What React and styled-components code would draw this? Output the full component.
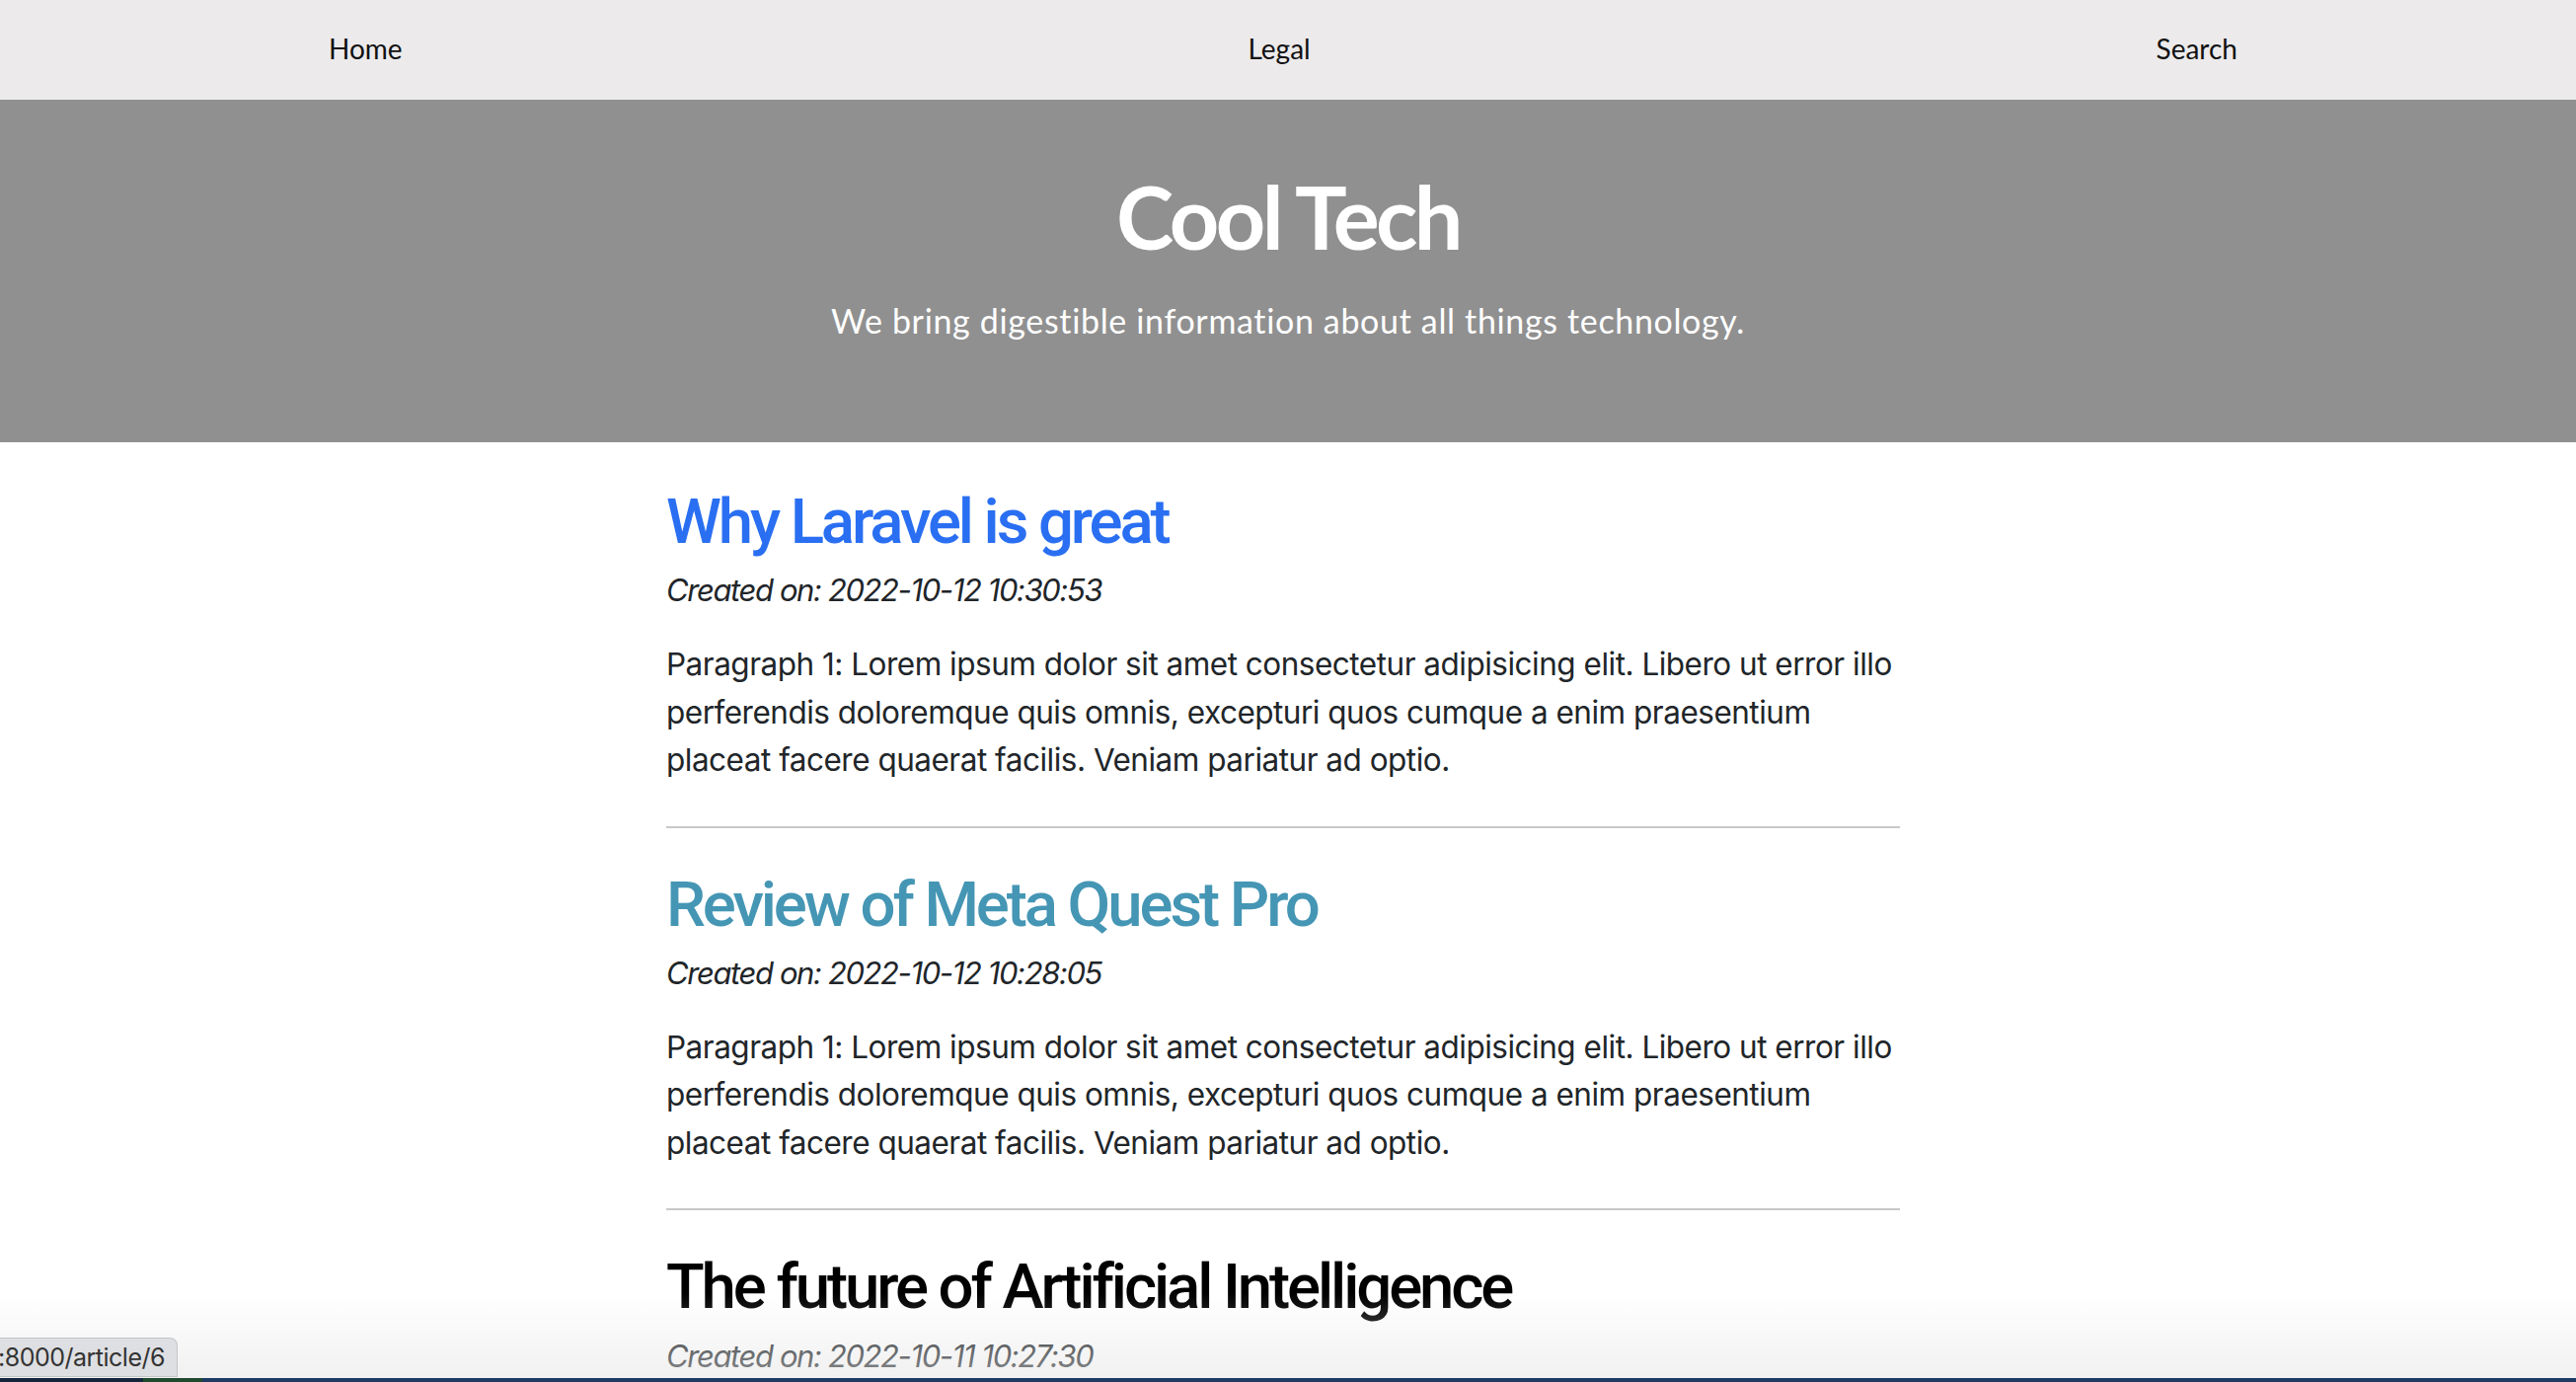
import React from "react";
import styled, { createGlobalStyle } from "styled-components";

const GlobalStyle = createGlobalStyle`
  html, body { margin: 0; padding: 0; background: #ffffff; }
  body { overflow: hidden; }
  * { box-sizing: border-box; }
`;

const Page = styled.div`
  position: relative;
  width: 2610px;
  height: 1400px;
  overflow: hidden;
  background: #ffffff;
`;

const Nav = styled.nav`
  height: 101px;
  background: #eceaeb;
  display: flex;
  align-items: center;
  justify-content: space-between;
  padding: 0 343px 3px 333px;
`;

const NavLink = styled.a`
  font-family: Lato, "Open Sans", sans-serif;
  font-size: 28px;
  color: #111;
  text-decoration: none;
`;

const Hero = styled.header`
  height: 347px;
  background: #909090;
  display: flex;
  flex-direction: column;
  align-items: center;
  padding-top: 70px;
  color: #ffffff;
  font-family: Lato, "Open Sans", sans-serif;
`;

const HeroTitle = styled.h1`
  margin: 0;
  font-size: 88px;
  font-weight: 700;
  line-height: 1.1;
  letter-spacing: -3.6px;
`;

const HeroSub = styled.p`
  margin: 37px 0 0;
  font-size: 34px;
  line-height: 1.2;
  letter-spacing: 0.65px;
`;

const Main = styled.main`
  width: 1260px;
  margin: 0 auto;
  padding: 43px 10px 0 0;
  font-family: Inter, "Liberation Sans", sans-serif;
  color: #212529;
`;

const Article = styled.article`
  display: flex;
  flex-direction: column;
`;

const Title = styled.h2`
  margin: 0 0 7px;
  font-family: Roboto, Inter, sans-serif;
  font-size: 63.5px;
  font-weight: 500;
  line-height: 1.2;
  letter-spacing: -3.1px;
  color: ${(p) => p.$color};
`;

const Meta = styled.p`
  margin: 0 0 27px;
  font-size: 31px;
  line-height: 48px;
  font-style: italic;
  letter-spacing: -1.4px;
`;

const Body = styled.p`
  margin: 0 0 42px;
  font-size: 31.5px;
  line-height: 48.5px;
  letter-spacing: -0.5px;
`;

const Divider = styled.hr`
  border: none;
  border-top: 2px solid #c8c8c8;
  margin: 0 0 40px;
`;

const Fade = styled.div`
  position: absolute;
  left: 0;
  right: 0;
  bottom: 0;
  height: 90px;
  background: linear-gradient(to bottom, rgba(235, 235, 235, 0), rgba(228, 228, 228, 0.55));
  pointer-events: none;
`;

const Status = styled.div`
  position: absolute;
  left: 0;
  bottom: 5px;
  width: 180px;
  height: 40px;
  display: flex;
  justify-content: flex-end;
  align-items: center;
  padding-right: 12px;
  overflow: hidden;
  white-space: nowrap;
  background: #dedfe2;
  border: 1px solid #c4c5c8;
  border-left: none;
  border-top-right-radius: 8px;
  font-family: Inter, "Liberation Sans", sans-serif;
  font-size: 25px;
  letter-spacing: -0.5px;
  color: #333;
`;

const Dock = styled.div`
  position: absolute;
  left: 0;
  right: 0;
  bottom: 0;
  height: 4px;
  background: linear-gradient(to right, #15263c 0, #15263c 145px, #1f4a2e 145px, #1f4a2e 205px, #1d3b63 205px);
`;

const LOREM =
  "Paragraph 1: Lorem ipsum dolor sit amet consectetur adipisicing elit. Libero ut error illo perferendis doloremque quis omnis, excepturi quos cumque a enim praesentium placeat facere quaerat facilis. Veniam pariatur ad optio.";

const articles = [
  { title: "Why Laravel is great", date: "2022-10-12 10:30:53", color: "#2a6ff2" },
  { title: "Review of Meta Quest Pro", date: "2022-10-12 10:28:05", color: "#4596b4" },
  { title: "The future of Artificial Intelligence", date: "2022-10-11 10:27:30", color: "#000000" },
];

export default function App() {
  return (
    <Page>
      <GlobalStyle />
      <Nav>
        <NavLink href="#">Home</NavLink>
        <NavLink href="#">Legal</NavLink>
        <NavLink href="#">Search</NavLink>
      </Nav>
      <Hero>
        <HeroTitle>Cool Tech</HeroTitle>
        <HeroSub>We bring digestible information about all things technology.</HeroSub>
      </Hero>
      <Main>
        {articles.map((a, i) => (
          <Article key={a.title}>
            <Title $color={a.color}>{a.title}</Title>
            <Meta>Created on: {a.date}</Meta>
            <Body>{LOREM}</Body>
            {i < articles.length - 1 && <Divider />}
          </Article>
        ))}
      </Main>
      <Fade />
      <Status>http://127.0.0.1:8000/article/6</Status>
      <Dock />
    </Page>
  );
}
